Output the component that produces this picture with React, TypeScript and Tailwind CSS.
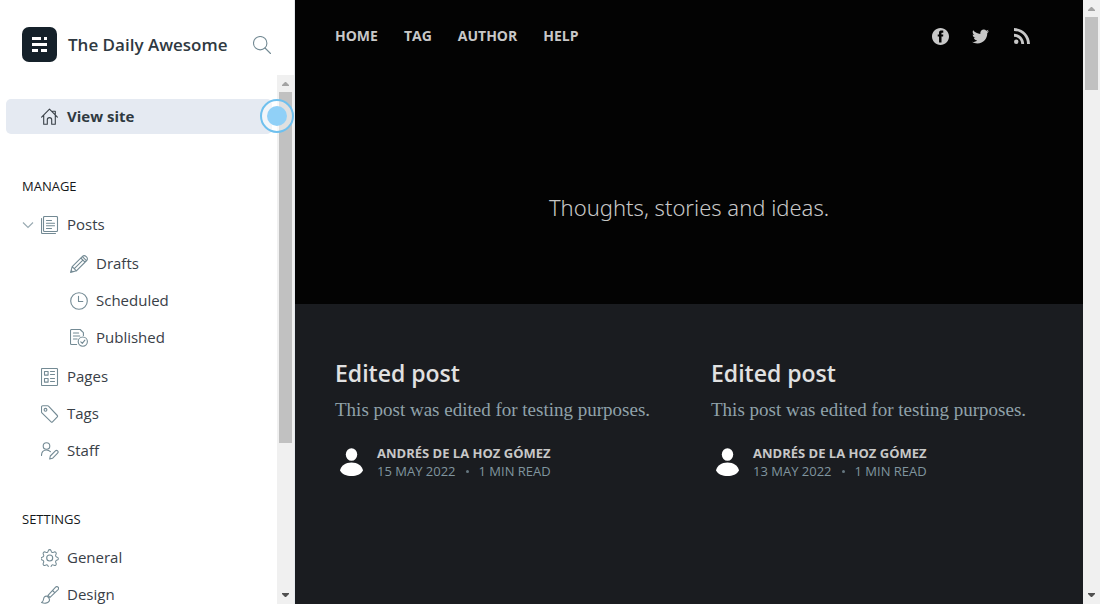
import type { ReactNode } from "react";
import { FaTwitter } from "react-icons/fa";

function Icon({ children, className = "text-[#738a94]" }: { children: ReactNode; className?: string }) {
  return (
    <svg
      viewBox="0 0 18 18"
      className={`size-[18px] shrink-0 ${className}`}
      fill="none"
      stroke="currentColor"
      strokeWidth="1.1"
      strokeLinecap="round"
      strokeLinejoin="round"
      aria-hidden="true"
    >
      {children}
    </svg>
  );
}

const HomeIcon = () => (
  <Icon className="text-[#394047]">
    <path d="M.6 9.100 8.500 1.200l7.900 7.900M2.700 7.200v9h3.600v-4.400a2.200 2.200 0 0 1 4.400 0v4.400h3.600v-9M11.500 3.200h2.800v3" />
  </Icon>
);

const PostsIcon = () => (
  <Icon>
    <rect x="2.500" y=".5" width="14" height="15" rx="1" />
    <path d="M.5 2.500v14a1 1 0 0 0 1 1h13M5.500 4.500h5M5.500 7.200h8M5.500 9.800h8M5.500 12.500h5" />
  </Icon>
);

const PencilIcon = () => (
  <Icon>
    <path d="m2.200 11.600-1.600 5.800 5.800-1.600L16.700 5.500a2.400 2.400 0 0 0 0-3.400l-.8-.8a2.400 2.400 0 0 0-3.400 0L2.200 11.600l4.200 4.200M10.800 3l4.200 4.200M12.400 1.600l4 4M4.300 13.700l8.600-8.600M1.200 15.400l1.400 1.400" />
  </Icon>
);

const ClockIcon = () => (
  <Icon>
    <circle cx="9" cy="9" r="8.300" />
    <path d="M8.500 4.200v5.300h4.300" />
  </Icon>
);

const PublishedIcon = () => (
  <Icon>
    <path d="M6.600 15.500H1.500a1 1 0 0 1-1-1v-13a1 1 0 0 1 1-1h8.700l3.200 3.200v2.700M3.400 4h5.200M3.400 7h6.400M3.400 10h3.800" />
    <circle cx="12.800" cy="12.600" r="4.600" />
    <path d="m10.800 12.800 1.500 1.500 2.600-3.200" />
  </Icon>
);

const PagesIcon = () => (
  <Icon>
    <rect x=".5" y=".5" width="16" height="17" rx=".8" />
    <path d="M3.500 3.500h3.600v3.600H3.500zM3.500 10.500h3.600v3.600H3.500zM9.500 3.500h4M9.500 6.500h4M9.500 10.500h4M9.500 13.500h4" />
  </Icon>
);

const TagIcon = () => (
  <Icon>
    <path d="M.5 2v4.900c0 .4.1.7.4 1l9.200 9c.4.4 1 .4 1.400 0l4.800-5c.4-.4.4-1 0-1.400L7.500 1.100C7.200.8 6.900.7 6.500.7H1.800A1.300 1.300 0 0 0 .5 2Z" />
    <circle cx="4.500" cy="4.800" r="1.400" />
  </Icon>
);

const StaffIcon = () => (
  <Icon>
    <circle cx="5.500" cy="4" r="3.300" />
    <path d="M.5 13.400c0-3.300 1.900-5.400 4.900-5.400 1.700 0 3 .6 4 1.700M8.700 17l.6-3 5.100-5.100a1.500 1.500 0 0 1 2.200 2.200L11.500 16.300 8.700 17Z" />
  </Icon>
);

const GearIcon = () => (
  <Icon>
    <circle cx="8.700" cy="9" r="3" />
    <path
      transform="translate(.4 .3) scale(.92 .96)"
      d="M7.500 1.400a1.600 1.600 0 0 1 3 0l.3.900a1.600 1.600 0 0 0 2.200.900l.9-.400a1.600 1.600 0 0 1 2.100 2.100l-.4.900a1.600 1.600 0 0 0 .9 2.200l.8.300a1.500 1.500 0 0 1 0 2.900l-.8.300a1.600 1.600 0 0 0-.9 2.200l.4.900a1.600 1.600 0 0 1-2.100 2.100l-.9-.400a1.600 1.600 0 0 0-2.200.900l-.3.900a1.600 1.600 0 0 1-3 0l-.3-.900a1.600 1.600 0 0 0-2.200-.900l-.9.400A1.600 1.600 0 0 1 2 14.600l.4-.900a1.600 1.600 0 0 0-.9-2.200l-.8-.300a1.500 1.500 0 0 1 0-2.900l.8-.300a1.600 1.600 0 0 0 .9-2.200L2 4.900a1.600 1.600 0 0 1 2.100-2.100l.9.400a1.600 1.600 0 0 0 2.200-.900Z"
    />
  </Icon>
);

const BrushIcon = () => (
  <Icon>
    <path d="m7 9.400 7.600-8.200a1.700 1.700 0 0 1 2.500 2.400L9 11.400M7 9.400l2 2M11.600 4.500l2.100 2.200M6.200 10.200c-2.600-.4-3.400 1.200-3.600 2.800-.2 1.700-.8 2.800-2 3.500 2.600 1.200 6.100.9 7.400-1.100 1-1.600.5-3.400-1.800-5.200Z" />
  </Icon>
);

function NavItem({ icon, label }: { icon: ReactNode; label: string }) {
  return (
    <a href="#" className="flex h-[37px] items-center gap-2 text-[15px] text-[#394047]">
      {icon}
      {label}
    </a>
  );
}

function SectionTitle({ children }: { children: ReactNode }) {
  return <h2 className="mt-[42px] mb-3 pl-[22px] text-[13px] leading-4 text-[#15171a]">{children}</h2>;
}

function Arrow({ down = false }: { down?: boolean }) {
  return (
    <svg viewBox="0 0 17 17" className={`size-[17px] ${down ? "text-[#505050]" : "text-[#a3a3a3]"}`} fill="currentColor" aria-hidden="true">
      <path d={down ? "M5 6h7v1l-3 3H8L5 7Z" : "M5 11h7v-1L9 7H8l-3 3Z"} />
    </svg>
  );
}

function Scrollbar({ thumb }: { thumb: string }) {
  return (
    <div className="flex w-[17px] shrink-0 flex-col bg-[#f0f0f0]">
      <Arrow />
      <div className="flex-1 px-0.5">
        <div className={`bg-[#c1c1c1] ${thumb}`} />
      </div>
      <Arrow down />
    </div>
  );
}

function Sidebar() {
  return (
    <aside className="flex w-[295px] shrink-0 flex-col border-r border-[#e5e9ed] bg-white">
      <header className="flex h-[75px] shrink-0 items-center pt-[14px] pr-[23px] pl-[22px]">
        <svg viewBox="0 0 35 35" className="size-[35px]" aria-hidden="true">
          <rect width="35" height="35" rx="7" fill="#15212a" />
          <path fill="#fff" d="M10 10h9v3h-9zM22 10h3v3h-3zM10 16h15v3H10zM10 22h6v3h-6zM19 22h6v3h-6z" />
        </svg>
        <h1 className="ml-[11px] flex-1 text-[17px] font-semibold whitespace-nowrap text-[#2f3941]">The Daily Awesome</h1>
        <button type="button" aria-label="Search" className="flex">
          <Icon>
            <circle cx="7.200" cy="7.200" r="6.700" />
            <path d="m12 12 5.500 5.500" />
          </Icon>
        </button>
      </header>
      <div className="flex min-h-0 flex-1">
        <nav aria-label="Main" className="min-w-0 flex-1 pt-6">
          <div className="relative mr-[5px] mb-11 ml-[6px]">
            <a href="#" className="flex h-[35px] items-center gap-2 rounded-[5px] bg-[#e5eaf2] pl-[35px] text-[15px] font-bold text-[#2f3941]">
              <HomeIcon />
              View site
            </a>
            <span className="absolute top-0 -right-[22px] z-10 flex size-[34px] items-center justify-center rounded-full border-2 border-[#6fc0ee] bg-white/50">
              <span className="size-5 rounded-full bg-[#90d0f7]" />
            </span>
          </div>
          <SectionTitle>MANAGE</SectionTitle>
          <div className="flex items-center pl-[22px]">
            <button type="button" aria-label="Collapse posts" className="mr-[7px] flex text-[#9aabb3]">
              <svg viewBox="0 0 12 12" className="size-3" fill="none" stroke="currentColor" strokeWidth="1.200" aria-hidden="true">
                <path d="m1 3.500 5 5 5-5" />
              </svg>
            </button>
            <NavItem icon={<PostsIcon />} label="Posts" />
          </div>
          <div className="my-0.5 pl-[70px]">
            <NavItem icon={<PencilIcon />} label="Drafts" />
            <NavItem icon={<ClockIcon />} label="Scheduled" />
            <NavItem icon={<PublishedIcon />} label="Published" />
          </div>
          <div className="pl-[41px]">
            <NavItem icon={<PagesIcon />} label="Pages" />
            <NavItem icon={<TagIcon />} label="Tags" />
            <NavItem icon={<StaffIcon />} label="Staff" />
          </div>
          <SectionTitle>SETTINGS</SectionTitle>
          <div className="pl-[41px]">
            <NavItem icon={<GearIcon />} label="General" />
            <NavItem icon={<BrushIcon />} label="Design" />
          </div>
        </nav>
        <Scrollbar thumb="h-[71%]" />
      </div>
    </aside>
  );
}

function PostCard({ date }: { date: string }) {
  return (
    <article className="min-w-0">
      <h2 className="text-[23px] leading-7 font-semibold text-[#e1e1e1]">Edited post</h2>
      <p className="mt-[9px] font-['Liberation_Serif',serif] text-[19px] leading-7 whitespace-nowrap text-[#90a2aa]">
        This post was edited for testing purposes.
      </p>
      <footer className="mt-5 flex items-center gap-2">
        <svg viewBox="0 0 34 34" className="size-[34px]" fill="#fff" aria-hidden="true">
          <ellipse cx="16.500" cy="9.500" rx="5.700" ry="6.300" />
          <path d="M5 25.500c1-5 5.500-8 11.500-8s10.500 3 11.500 8c-2 3.800-6.500 5.500-11.500 5.500S7 29.300 5 25.500Z" />
        </svg>
        <div className="text-[13px] leading-[18px]">
          <div className="font-bold text-[#c8c8c8]">ANDRÉS DE LA HOZ GÓMEZ</div>
          <div className="flex items-center text-[#80959f]">
            <time>{date}</time>
            <span className="mx-[10px] size-[3px] rounded-full bg-[#667780]" />
            <span>1 MIN READ</span>
          </div>
        </div>
      </footer>
    </article>
  );
}

export default function App() {
  return (
    <div className="flex h-screen overflow-hidden bg-[#1a1c20] font-['Open_Sans','Noto_Sans',sans-serif]">
      <Sidebar />
      <main className="flex min-w-0 flex-1 flex-col">
        <header className="flex h-[304px] shrink-0 flex-col bg-[#030303] px-10 text-[#c8c8c8]">
          <div className="flex h-[70px] items-center">
            <nav aria-label="Site" className="flex flex-1 gap-[26px] text-[14px] font-bold">
              <a href="#">HOME</a>
              <a href="#">TAG</a>
              <a href="#">AUTHOR</a>
              <a href="#">HELP</a>
            </nav>
            <div className="flex items-center gap-[23px] pt-0.5 pr-[13px]">
              <a href="#" aria-label="Facebook">
                <svg viewBox="0 0 32 32" className="size-[17px]" fill="currentColor">
                  <path d="M16 0c8.837 0 16 7.163 16 16s-7.163 16-16 16S0 24.837 0 16 7.163 0 16 0zm5.204 4.911h-3.546c-2.103 0-4.443.885-4.443 3.934.01 1.062 0 2.080 0 3.225h-2.433v3.872h2.509v11.147h4.610v-11.220h3.042l.275-3.810h-3.397s.007-1.695 0-2.187c0-1.205 1.253-1.136 1.329-1.136.596 0 1.756.002 2.054 0V4.911z" />
                </svg>
              </a>
              <a href="#" aria-label="Twitter">
                <FaTwitter className="size-[17px]" />
              </a>
              <a href="#" aria-label="RSS">
                <svg viewBox="4 4.400 15.600 15.600" className="ml-0.5 size-4" fill="currentColor">
                  <circle cx="6.180" cy="17.820" r="2.180" />
                  <path d="M4 4.440v2.830c7.030 0 12.730 5.700 12.730 12.730h2.830c0-8.590-6.970-15.560-15.560-15.560zm0 5.660v2.830c3.900 0 7.070 3.170 7.070 7.070h2.830c0-5.470-4.430-9.900-9.900-9.900z" />
                </svg>
              </a>
            </div>
          </div>
          <p className="mt-[121px] text-center font-['Noto_Sans','Open_Sans',sans-serif] text-[22px] leading-8 font-light">
            Thoughts, stories and ideas.
          </p>
        </header>
        <section className="grid grid-cols-2 gap-11 px-10 pt-[55px]">
          <PostCard date="15 MAY 2022" />
          <PostCard date="13 MAY 2022" />
        </section>
      </main>
      <Scrollbar thumb="h-[73px]" />
    </div>
  );
}
